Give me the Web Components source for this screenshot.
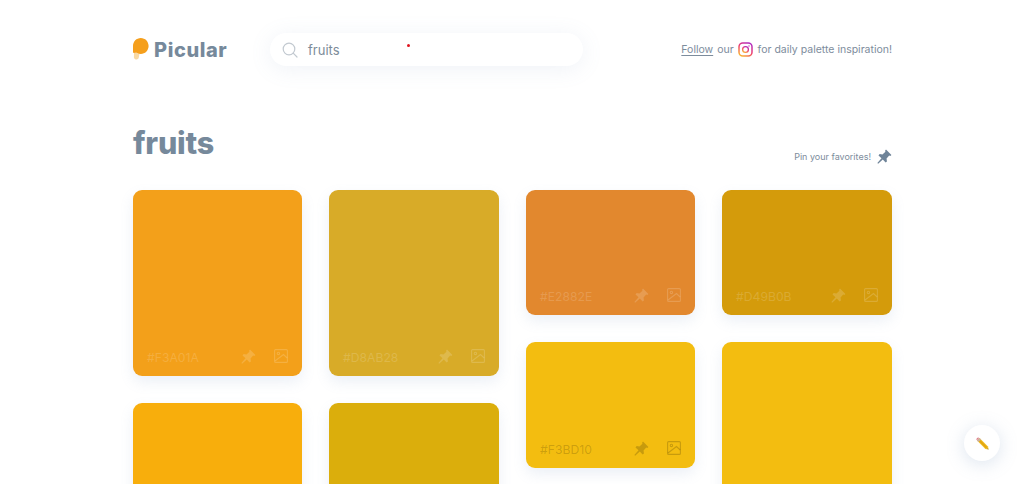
<!DOCTYPE html>
<html lang="en">
<head>
<meta charset="utf-8">
<title>Picular</title>
<style>
	html, body { margin: 0; height: 484px; overflow: hidden; background: #fff; }
	body { font-family: Inter, "Liberation Sans", sans-serif; color: #76899b; }
</style>
</head>
<body>
<picular-app>
	<site-header slot="header"></site-header>
	<results-head slot="head" title="fruits"></results-head>
	<swatch-column>
		<swatch-card color="#F3A01A" height="186" faded></swatch-card>
		<swatch-card color="#F8AE0C" height="186" label="" faded></swatch-card>
	</swatch-column>
	<swatch-column>
		<swatch-card color="#D8AB28" height="186" faded></swatch-card>
		<swatch-card color="#DBAE0C" height="186" label="" faded></swatch-card>
	</swatch-column>
	<swatch-column>
		<swatch-card color="#E2882E" height="125" faded></swatch-card>
		<swatch-card color="#F3BD10" height="126"></swatch-card>
	</swatch-column>
	<swatch-column>
		<swatch-card color="#D49B0B" height="125" faded></swatch-card>
		<swatch-card color="#F3BD10" height="186" label=""></swatch-card>
	</swatch-column>
	<edit-button slot="fab"></edit-button>
</picular-app>

<script>
const PIN = `<path d="M9.6.6 15.4 6.4 14.2 7.4 13 7 10.2 10.2 10.6 13.2 9.2 14.4 6.2 11.2 1.2 15.6.4 14.8 4.8 9.8 1.6 6.8 2.8 5.4 5.8 5.8 9 3 8.6 1.8Z" fill="currentColor"/>`;

class PicularApp extends HTMLElement {
	constructor() {
		super();
		this.attachShadow({ mode: 'open' }).innerHTML = `
			<style>
				:host { display: block; height: 484px; overflow: hidden; position: relative; }
				#wrap { width: 759px; margin-left: 133px; }
				#grid { display: grid; grid-template-columns: 169px 170px 169px 170px; column-gap: 27px; align-items: start; }
				::slotted([slot="fab"]) { position: absolute; right: 24px; bottom: 23px; }
			</style>
			<div id="wrap">
				<slot name="header"></slot>
				<slot name="head"></slot>
				<div id="grid"><slot></slot></div>
			</div>
			<slot name="fab"></slot>
		`;
	}
}

class SiteHeader extends HTMLElement {
	constructor() {
		super();
		this.attachShadow({ mode: 'open' }).innerHTML = `
			<style>
				:host { display: flex; align-items: center; height: 33px; padding-top: 33px; margin-bottom: -1px; }
				#logo { display: flex; align-items: center; gap: 5px; width: 137px; font: 800 20px/24px Inter, sans-serif; color: #76899b; letter-spacing: .6px; }
				#logo svg { display: block; margin-top: -1px; }
				#follow { margin-left: auto; display: flex; align-items: center; gap: 5px; font: 400 10.5px/16px Inter, sans-serif; color: #7d8c9c; white-space: nowrap; }
				u { text-underline-offset: 2px; margin-right: 1px; }
				#follow svg { display: block; }
			</style>
			<div id="logo">
				<svg width="16" height="22" viewBox="0 0 16 22">
					<path d="M1 14.5 6.5 15.5 5.8 19.6C5.6 21 4.4 21.7 3 21.5 1.6 21.3 .7 20.1 .9 18.7Z" fill="#f9d9a3"/>
					<path d="M0 8C0 3.6 3.4 0 7.8 0S15.6 3.6 15.6 8 12 16 7.8 16C6.5 16 5.3 15.6 4.3 15.1 3.5 14.7 2.2 14.8 1.1 15 .4 15.1 0 14.7 0 14Z" fill="#f59f1c"/>
				</svg>
				<span>Picular</span>
			</div>
			<search-box></search-box>
			<div id="follow">
				<span><u>Follow</u> our</span>
				<svg width="15" height="15" viewBox="0 0 15 15" style="margin-left:-1px">
					<defs><linearGradient id="ig" x1="0.2" y1="1" x2="0.8" y2="0">
						<stop offset="0" stop-color="#f9b233"/><stop offset=".5" stop-color="#ee3f6f"/><stop offset="1" stop-color="#b02bc0"/>
					</linearGradient></defs>
					<rect x="1" y="1" width="13" height="13" rx="3.8" fill="none" stroke="url(#ig)" stroke-width="1.5"/>
					<circle cx="7.5" cy="7.5" r="2.9" fill="none" stroke="url(#ig)" stroke-width="1.3"/>
					<circle cx="11" cy="4" r=".7" fill="#c12fa8"/>
				</svg>
				<span>for daily palette inspiration!</span>
			</div>
		`;
	}
}

class SearchBox extends HTMLElement {
	constructor() {
		super();
		this.attachShadow({ mode: 'open' }).innerHTML = `
			<style>
				:host { display: flex; align-items: center; gap: 10px; box-sizing: border-box; width: 313px; height: 33px; padding-left: 12px; border-radius: 17px; background: #fff; box-shadow: 0 3px 22px rgba(120, 150, 190, .12); position: relative; }
				svg { display: block; }
				span { font: 400 13px/18px Inter, sans-serif; color: #7c8b99; }
				i { position: absolute; left: 137px; top: 11px; width: 3px; height: 3px; border-radius: 50%; background: #e0141f; }
			</style>
			<svg width="16" height="16" viewBox="0 0 16 16" fill="none" stroke="#c2c9d0" stroke-width="1.2">
				<circle cx="7" cy="7" r="5.8"/><path d="M11.2 11.2 15 15" stroke-linecap="round"/>
			</svg>
			<span>fruits</span>
			<i></i>
		`;
	}
}

class ResultsHead extends HTMLElement {
	constructor() {
		super();
		this.attachShadow({ mode: 'open' }).innerHTML = `
			<style>
				:host { display: flex; justify-content: space-between; align-items: flex-end; height: 125px; box-sizing: border-box; padding-bottom: 25px; }
				h1 { margin: 0 0 2px; font: 800 30.5px/40px Inter, sans-serif; color: #76899b; letter-spacing: -.2px; }
				#pin { display: flex; align-items: center; gap: 6px; font: 400 9px/16px Inter, sans-serif; color: #7d8c9c; }
				svg { display: block; color: #6f8499; margin-bottom: 1px; }
			</style>
			<h1>${this.getAttribute('title')}</h1>
			<div id="pin"><span>Pin your favorites!</span><svg width="15" height="15" viewBox="0 0 16 16">${PIN}</svg></div>
		`;
	}
}

class SwatchColumn extends HTMLElement {
	constructor() {
		super();
		this.attachShadow({ mode: 'open' }).innerHTML = `
			<style>:host { display: flex; flex-direction: column; gap: 27px; }</style>
			<slot></slot>
		`;
	}
}

class SwatchCard extends HTMLElement {
	constructor() {
		super();
		const color = this.getAttribute('color');
		const label = this.hasAttribute('label') ? this.getAttribute('label') : color;
		this.attachShadow({ mode: 'open' }).innerHTML = `
			<style>
				:host { display: flex; align-items: flex-end; box-sizing: border-box; padding: 0 14px 10px 14px; border-radius: 9px; background: ${color}; height: ${this.getAttribute('height')}px; box-shadow: 0 6px 14px rgba(120, 150, 190, .14); }
				#row { flex: 1; display: flex; align-items: center; height: 20px; color: rgba(0, 0, 0, .18); }
				:host([faded]) #row { color: rgba(255, 255, 255, .17); }
				span { flex: 1; font: 400 12.2px/20px Inter, sans-serif; position: relative; top: 2px; }
				svg { display: block; }
				svg + svg { margin-left: 18px; }
			</style>
			${label ? `<div id="row">
				<span>${label}</span>
				<svg width="15" height="15" viewBox="0 0 16 16">${PIN}</svg>
				<svg width="14" height="14" viewBox="0 0 14 14" fill="none" stroke="currentColor" stroke-width="1.1">
					<rect x=".6" y=".6" width="12.8" height="12.8" rx="1"/>
					<circle cx="4.4" cy="4.4" r="1.2"/>
					<path d="M1 12 9.5 5.5 13.2 9"/>
				</svg>
			</div>` : ''}
		`;
	}
}

class EditButton extends HTMLElement {
	constructor() {
		super();
		this.attachShadow({ mode: 'open' }).innerHTML = `
			<style>
				:host { display: flex; align-items: center; justify-content: center; width: 36px; height: 36px; border-radius: 50%; background: #fff; box-shadow: 0 3px 18px rgba(120, 150, 190, .26); }
				svg { display: block; }
			</style>
			<svg width="13" height="13" viewBox="0 0 13 13">
				<path d="M3.6 1 12 9.4 12.6 12.6 9.4 12 1 3.6Z" fill="#f2c22a"/>
				<path d="M3 4.4 4.4 3 11.4 10 10 11.4Z" fill="#e3a70f"/>
				<path d="M1 3.6 3.6 1 5 2.4 2.4 5Z" fill="#c9b0a0"/>
				<path d="M.7 1.6 1.6.7C2.1.2 2.7.3 3.2.9L.9 3.2C.3 2.7.2 2.1.7 1.6Z" fill="#dc7f8c"/>
				<path d="M11.3 11.9 12.6 12.6 11.9 11.3Z" fill="#6b5b4b"/>
			</svg>
		`;
	}
}

customElements.define('picular-app', PicularApp);
customElements.define('site-header', SiteHeader);
customElements.define('search-box', SearchBox);
customElements.define('results-head', ResultsHead);
customElements.define('swatch-column', SwatchColumn);
customElements.define('swatch-card', SwatchCard);
customElements.define('edit-button', EditButton);
</script>
</body>
</html>
